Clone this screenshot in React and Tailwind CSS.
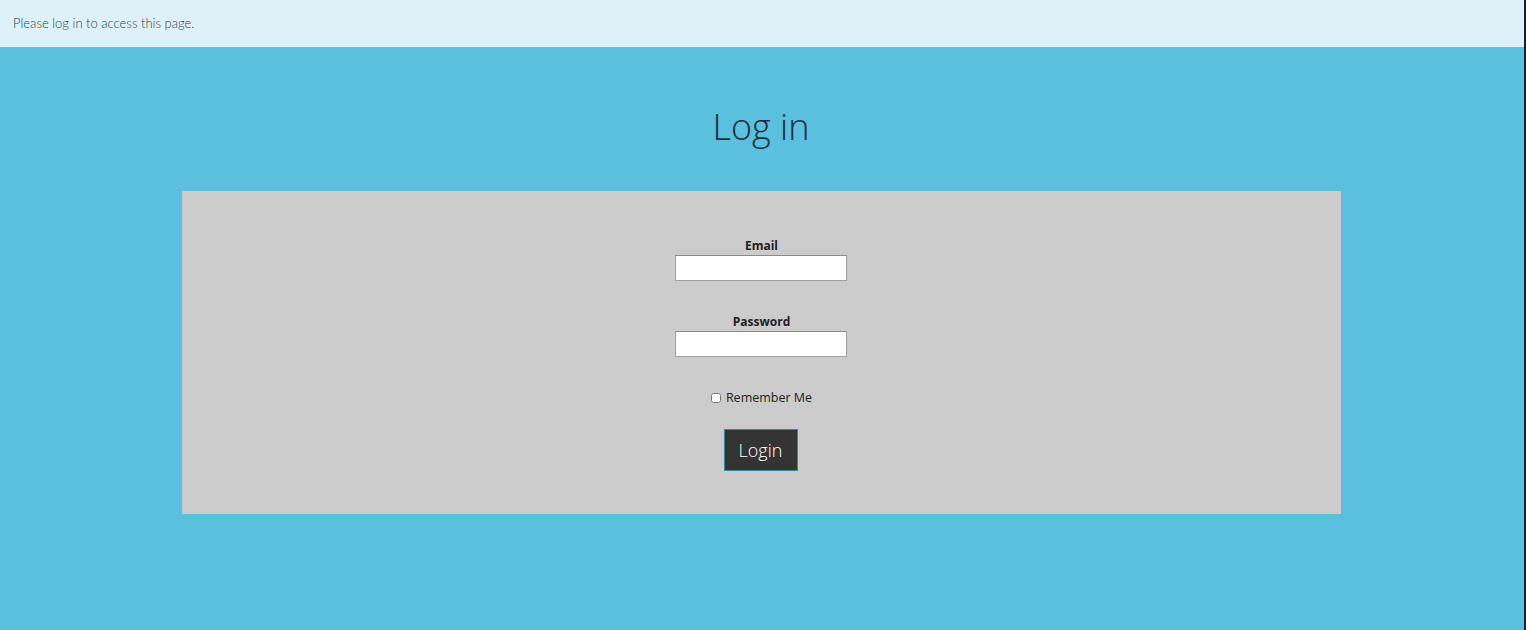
// App.jsx — login page

export default function App() {
  return (
    <div className="flex min-h-[630px] w-full">
      <div className="flex-1 bg-[#5bbfde]">
        {/* Notice bar */}
        <div className="h-[47px] bg-[#dff1f8] flex items-center px-[13px]">
          <span className="text-[13px] font-light text-[#2e3f4b] [font-family:Lato,sans-serif]">
            Please log in to access this page.
          </span>
        </div>

        {/* Title */}
        <h1 className="pt-[57px] pr-[2px] text-center text-[36px] leading-[46px] font-light text-[#1a2f3d] [font-family:'Open_Sans',sans-serif]">
          Log in
        </h1>

        {/* Form panel */}
        <div className="mt-[41px] ml-[182px] w-[1159px] h-[323px] bg-[#cccccc] [font-family:'Open_Sans',sans-serif] flex flex-col items-center pt-[46px] pr-[2px]">
          <label className="pl-[2px] text-[12px] font-bold text-[#222] leading-[18px]">Email</label>
          <input
            type="text"
            className="w-[172px] h-[26px] bg-white border border-[#a0a0a0] border-t-[#8a8a8a]"
          />

          <label className="mt-[32px] pl-[2px] text-[12px] font-bold text-[#222] leading-[18px]">Password</label>
          <input
            type="password"
            className="w-[172px] h-[26px] bg-white border border-[#a0a0a0] border-t-[#8a8a8a]"
          />

          <div className="mt-[33px] pl-[2px] flex items-center gap-[5px] text-[12.5px] text-[#222] leading-[16px]">
            <input type="checkbox" className="w-[10px] h-[10px] m-0" />
            <span>Remember Me</span>
          </div>

          <button className="mt-[23px] w-[74px] h-[42px] bg-[#333333] border border-[#2f8aa3] text-white text-[18px] font-light">
            Login
          </button>
        </div>
      </div>
      <div className="w-[2px] bg-[#1c2024]" />
    </div>
  );
}
